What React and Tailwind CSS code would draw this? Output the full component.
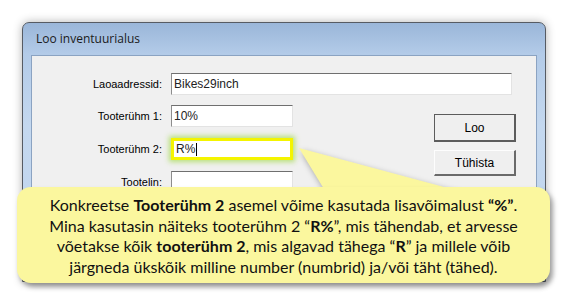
import React from "react"

const win = { fontFamily: '"Liberation Sans", Arial, sans-serif' }
const note = { fontFamily: 'Lato, "Open Sans", sans-serif' }

function TextBox({ width, value, highlight, cursor }) {
  return (
    <div
      className={
        highlight
          ? "h-[22px] flex items-center bg-white border-[3px] border-[#f4f400] shadow-[0_0_5px_2px_rgba(170,220,90,0.8)] pl-[2px] text-[12px] text-[#222]"
          : "h-[22px] flex items-center bg-white border border-t-[#6f6f6f] border-l-[#8d8d8d] border-b-[#e3e3e3] border-r-[#e3e3e3] pl-[2px] text-[12px] text-[#222]"
      }
      style={{ width }}
    >
      {value}
      {cursor && <span className="ml-[1px] h-[13px] border-l border-black"></span>}
    </div>
  )
}

function Row({ label, children }) {
  return (
    <div className="flex items-center">
      <div className="w-[131px] text-right text-[11px] text-black pr-[1px]">{label}</div>
      <div className="ml-[8px]">{children}</div>
    </div>
  )
}

export default function App() {
  return (
    <div className="relative w-[568px] h-[298px] bg-white overflow-hidden">
      {/* Dialog window */}
      <div
        className="ml-[22px] mt-[22px] w-[524px] h-[260px] flex flex-col rounded-t-[7px] border border-[#565b63] px-[8px] pb-[8px] bg-[linear-gradient(180deg,#9ab6d9_0%,#b3cbe8_12%,#c4d8ef_40%,#c0d5ee_100%)] shadow-[0_0_10px_rgba(0,0,0,0.3)]"
        style={win}
      >
        <div className="h-[32px] flex items-center pl-[5px] text-[12px] text-[#1b1b1b]" style={{ fontFamily: '"Open Sans", sans-serif' }}>
          Loo inventuurialus
        </div>

        <div className="flex-1 bg-[#f0f0f0] border border-[#8ba3c2] pt-[17px]">
          <Row label="Laoaadressid:">
            <TextBox width={341} value="Bikes29inch" />
          </Row>

          <div className="flex mt-[10px]">
            <div className="flex flex-col gap-[11px]">
              <Row label="Tooterühm 1:">
                <TextBox width={122} value="10%" />
              </Row>
              <Row label="Tooterühm 2:">
                <TextBox width={122} value="R%" highlight cursor />
              </Row>
              <Row label="Tootelin:">
                <TextBox width={122} value="" />
              </Row>
            </div>

            <div className="ml-[141px] mt-[9px] flex flex-col gap-[8px]">
              <button className="w-[82px] h-[28px] bg-[#efefef] border border-[#5c5c5c] border-b-2 border-r-2 text-[12px] text-black">
                Loo
              </button>
              <button className="w-[82px] h-[26px] bg-[#efefef] border border-[#fdfdfd] border-b-2 border-r-2 border-b-[#6a6a6a] border-r-[#6a6a6a] text-[12px] text-black">
                Tühista
              </button>
            </div>
          </div>
        </div>
      </div>

      {/* Callout tail */}
      <svg className="absolute left-0 top-0 pointer-events-none" width="568" height="298">
        <polygon
          points="299,148 327,194 470,194"
          fill="#fbf79e"
          style={{ filter: "drop-shadow(2px 3px 3px rgba(0,0,0,0.35))" }}
        />
      </svg>

      {/* Callout */}
      <div
        className="absolute left-[17px] top-[187px] w-[533px] h-[96px] rounded-[14px] bg-[#fbf79e] shadow-[3px_4px_5px_rgba(0,0,0,0.35)] pt-[8px] text-center text-[16px] leading-[20.7px] text-[#111]"
        style={note}
      >
        Konkreetse <b>Tooterühm 2</b> asemel võime kasutada lisavõimalust <b>“%”</b>.
        <br />
        Mina kasutasin näiteks tooterühm 2 “<b>R%</b>”, mis tähendab, et arvesse
        <br />
        võetakse kõik <b>tooterühm 2</b>, mis algavad tähega “<b>R</b>” ja millele võib
        <br />
        järgneda ükskõik milline number (numbrid) ja/või täht (tähed).
      </div>
    </div>
  )
}
